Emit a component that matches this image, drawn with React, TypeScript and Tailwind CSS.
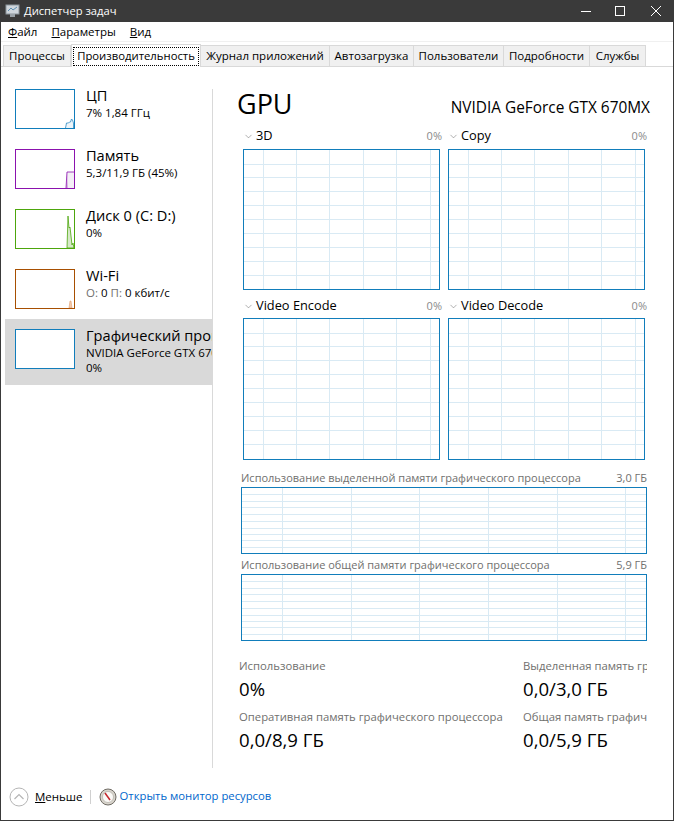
import { ChevronDown } from 'lucide-react';

const FONT = "font-['Open_Sans','Noto_Sans',sans-serif]";

const tabs = [
  { name: 'Процессы', w: 'w-[68px]' },
  { name: 'Производительность', w: 'w-[130px]', active: true },
  { name: 'Журнал приложений', w: 'w-[129px]' },
  { name: 'Автозагрузка', w: 'w-[84px]' },
  { name: 'Пользователи', w: 'w-[90px]' },
  { name: 'Подробности', w: 'w-[86px]' },
  { name: 'Службы', w: 'w-[56px]' },
];

const Grid = ({ w, h, xs, ys }: { w: number; h: number; xs: number[]; ys: number[] }) => (
  <svg width={w} height={h} className="block" shapeRendering="crispEdges">
    {xs.map((x) => (
      <line key={'x' + x} x1={x + 0.5} x2={x + 0.5} y1={0} y2={h} stroke="#d9eaf4" />
    ))}
    {ys.map((y) => (
      <line key={'y' + y} x1={0} x2={w} y1={y + 0.5} y2={y + 0.5} stroke="#d9eaf4" />
    ))}
  </svg>
);

const bigX = [19, 52, 85, 119, 152, 186];
const bigY = [14, 27, 41, 55, 69, 83, 97, 111, 125];
const memX = [40, 109, 177, 246, 315, 383];
const memY = [6, 13, 19, 26, 33, 40, 46, 52, 59];

const EngineGraph = ({ name, tall }: { name: string; tall?: boolean }) => (
  <div className="w-[197px]">
    <div className="flex h-[20px] items-center justify-between">
      <div className="flex items-center">
        <ChevronDown size={11} strokeWidth={1} className="text-[#555555]" />
        <span className="ml-[2px] text-[12.8px] text-black">{name}</span>
      </div>
      <span className="mr-[-2px] text-[11px] text-[#8a8a8a]">0%</span>
    </div>
    {tall ? (
      <div className="mt-[2px] box-content h-[140px] w-[195px] border border-[#117dbb]">
        <Grid w={195} h={140} xs={bigX} ys={bigY} />
      </div>
    ) : (
      <div className="mt-[3px] box-content h-[139px] w-[195px] border border-[#117dbb]">
        <Grid w={195} h={139} xs={bigX} ys={bigY} />
      </div>
    )}
  </div>
);

const MemGraph = ({ label, value }: { label: string; value: string }) => (
  <div className="w-[406px]">
    <div className="flex h-[16px] items-start justify-between text-[11px] leading-[14px] text-[#70706e]">
      <span>{label}</span>
      <span>{value}</span>
    </div>
    <div className="box-content h-[65px] w-[404px] border border-[#117dbb]">
      <Grid w={404} h={65} xs={memX} ys={memY} />
    </div>
  </div>
);

const Stat = ({ label, value, clip }: { label: string; value: string; clip?: boolean }) => (
  <div className={clip ? 'w-[124px] overflow-hidden' : 'w-[284px]'}>
    <div className="h-[16px] whitespace-nowrap text-[11.3px] leading-[16px] text-[#70706e]">{label}</div>
    <div className="mt-[2px] whitespace-nowrap text-[18.6px] leading-[26px] text-black">{value}</div>
  </div>
);

const SideItem = ({
  title,
  lines,
  color,
  selected,
  children,
}: {
  title: string;
  lines: React.ReactNode[];
  color: string;
  selected?: boolean;
  children?: React.ReactNode;
}) => (
  <div className={`flex w-[207px] overflow-hidden pl-[10px] pt-[10px] ${selected ? 'h-[66px] bg-[#d9d9d9]' : 'h-[60px]'}`}>
    <div className="h-[40px] w-[60px] shrink-0 border bg-white" style={{ borderColor: color }}>
      <svg width={58} height={38} className="block">
        {children}
      </svg>
    </div>
    <div className="ml-[11px] whitespace-nowrap">
      <div className="mt-[-3px] text-[14.6px] leading-[19px] text-black">{title}</div>
      {lines.map((l, i) => (
        <div key={i} className="text-[11.5px] leading-[15px] text-black">
          {l}
        </div>
      ))}
    </div>
  </div>
);

export default function App() {
  return (
    <div className={`flex h-[821px] w-[674px] flex-col overflow-hidden border border-[#3a3a3a] border-t-0 bg-white ${FONT}`}>
      {/* title bar */}
      <div className="mx-[-1px] flex h-[22px] shrink-0 items-center bg-[#3a3a3a] pl-[5px] text-[11.2px] text-white">
        <svg width={15} height={14} viewBox="0 0 15 14">
          <rect x={1} y={1} width={13} height={9} fill="#cfd6dc" stroke="#8b959c" />
          <path d="M3 7l3-3 2 2 4-3" fill="none" stroke="#5c8fb0" />
          <rect x={5} y={10} width={5} height={3} fill="#9aa2a8" />
        </svg>
        <span className="ml-[4px]">Диспетчер задач</span>
        <svg className="ml-auto" width={93} height={22} viewBox="0 0 93 22">
          <path d="M0 11.5h10" stroke="#fff" />
          <rect x={34.5} y={6.5} width={9} height={9} fill="none" stroke="#fff" />
          <path d="M70 6l10 10M80 6L70 16" stroke="#fff" />
        </svg>
      </div>

      {/* menu */}
      <div className="flex h-[19px] shrink-0 items-center gap-[14px] pl-[7px] text-[11.5px] text-black">
        <span><span className="underline">Ф</span>айл</span>
        <span><span className="underline">П</span>араметры</span>
        <span><span className="underline">В</span>ид</span>
      </div>
      <div className="h-[1px] shrink-0 bg-[#f0f0f0]" />

      {/* tabs */}
      <div className="flex h-[25px] shrink-0 items-end border-b border-[#d9d9d9] pl-[2px]">
        {tabs.map((t) =>
          t.active ? (
            <div key={t.name} className={`${t.w} z-10 mb-[-1px] flex h-[23px] items-center justify-center border border-b-0 border-[#d9d9d9] bg-white px-[1px] pt-[1px] text-[11.3px] text-black`}>
              <span className="flex h-[19px] w-full items-center justify-center whitespace-nowrap border border-dotted border-black">{t.name}</span>
            </div>
          ) : (
            <div key={t.name} className={`${t.w} flex h-[21px] items-center justify-center whitespace-nowrap border border-b-0 border-l-0 first:border-l border-[#d9d9d9] bg-[#f0f0f0] text-[11.5px] text-black`}>
              {t.name}
            </div>
          ),
        )}
      </div>

      {/* body */}
      <div className="flex min-h-0 flex-1">
        <div className="w-[211px] shrink-0 pl-[4px] pt-[12px]">
          <SideItem title="ЦП" lines={['7%  1,84 ГГц']} color="#117dbb">
            <path d="M49.5 38l1-5h2l1-1h1l1-3 1 1 1 3v5" fill="#eef5fa" stroke="#117dbb" strokeWidth={0.7} />
          </SideItem>
          <SideItem title="Память" lines={['5,3/11,9 ГБ (45%)']} color="#8b12ae">
            <path d="M50 38l1-16h7v16z" fill="#f4eff6" />
            <path d="M50 38l1-16 1 16z" fill="#d3a8e0" />
            <path d="M50 38l1-16h7" fill="none" stroke="#8b12ae" strokeWidth={0.8} />
          </SideItem>
          <SideItem title="Диск 0 (C: D:)" lines={['0%']} color="#4da60c">
            <path d="M51 38l1-32 1 12 1-1 2 18 1-2 1 5z" fill="#d6e9c8" stroke="#4da60c" strokeWidth={0.8} />
          </SideItem>
          <SideItem
            title="Wi-Fi"
            lines={[<span><span className="text-[#70706e]">О:</span> 0 <span className="text-[#70706e]">П:</span> 0 кбит/с</span>]}
            color="#a74f01"
          >
            <path d="M53 38l1-7h1l1 7z" fill="#f3c9ab" stroke="#e0a070" strokeWidth={0.6} />
          </SideItem>
          <SideItem title="Графический процессор 0" lines={['NVIDIA GeForce GTX 670MX', '0%']} color="#117dbb" selected />
        </div>

        <div className="flex min-w-0 flex-1 flex-col">
          <div className="mt-[22px] flex h-[679px] flex-none flex-col border-l border-[#d9d9d9]">
            <div className="ml-[24px] flex h-[33px] w-[413px] items-start justify-between">
              <span className="mt-[-3px] text-[27px] leading-[36px] text-black">GPU</span>
              <span className="mt-[8px] whitespace-nowrap text-[15.4px] leading-[22px] text-black">NVIDIA GeForce GTX 670MX</span>
            </div>

            <div className="ml-[30px] mt-[4px] grid w-[402px] grid-cols-2 gap-x-[8px] gap-y-[6px]">
              <EngineGraph name="3D" />
              <EngineGraph name="Copy" />
              <EngineGraph name="Video Encode" tall />
              <EngineGraph name="Video Decode" tall />
            </div>

            <div className="ml-[28px] mt-[11px] flex flex-col gap-[4px]">
              <MemGraph label="Использование выделенной памяти графического процессора" value="3,0 ГБ" />
              <MemGraph label="Использование общей памяти графического процессора" value="5,9 ГБ" />
            </div>

            <div className="ml-[26px] mt-[17px] flex flex-col gap-[7px]">
              <div className="flex">
                <Stat label="Использование" value="0%" />
                <Stat label="Выделенная память графического процессора" value="0,0/3,0 ГБ" clip />
              </div>
              <div className="flex">
                <Stat label="Оперативная память графического процессора" value="0,0/8,9 ГБ" />
                <Stat label="Общая память графического процессора" value="0,0/5,9 ГБ" clip />
              </div>
            </div>
          </div>
        </div>
      </div>

      {/* footer */}
      <div className="flex h-[52px] shrink-0 items-center pl-[8px] pt-[5px] text-[11.5px]">
        <svg width={20} height={20} viewBox="0 0 20 20">
          <circle cx={10} cy={10} r={9} fill="#fff" stroke="#b5b5b5" />
          <path d="M5.5 12l4.5-4.5 4.5 4.5" fill="none" stroke="#b5b5b5" strokeWidth={1.2} />
        </svg>
        <span className="ml-[6px] text-black"><span className="underline">М</span>еньше</span>
        <div className="ml-[7px] h-[14px] w-[1px] bg-[#d0d0d0]" />
        <svg className="ml-[8px]" width={18} height={18} viewBox="0 0 18 18">
          <circle cx={9} cy={9} r={8} fill="#d8d4cc" stroke="#6f6b64" />
          <circle cx={9} cy={9} r={5.5} fill="#fbfaf7" stroke="#a8a49c" strokeWidth={0.6} />
          <path d="M6 5L11 12" stroke="#c5252b" strokeWidth={1.5} />
        </svg>
        <span className="ml-[3px] text-[11.3px] text-[#0066cc]">Открыть монитор ресурсов</span>
      </div>
    </div>
  );
}
